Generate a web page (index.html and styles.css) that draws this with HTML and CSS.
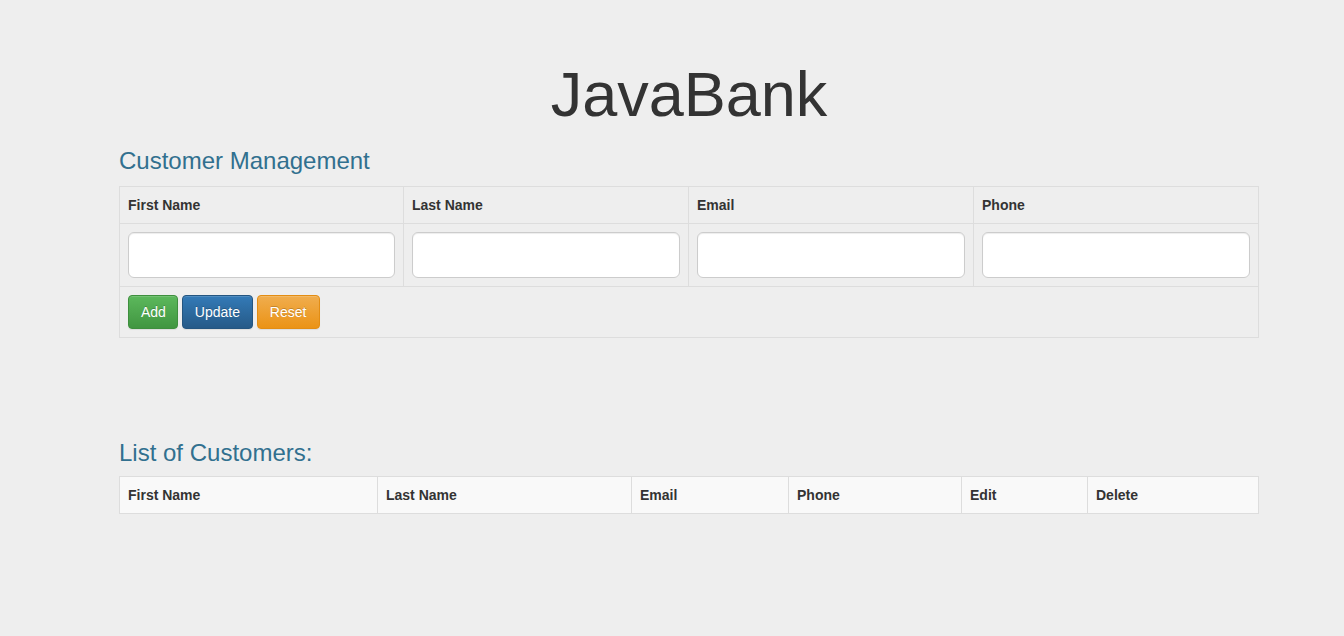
FILE: index.html
```html
<!DOCTYPE html>
<html>
<head>
<meta charset="utf-8">
<title>JavaBank</title>
<link rel="stylesheet" href="styles.css">
</head>
<body>
<div class="container">
  <h1 class="title">JavaBank</h1>
  <h3 class="section-title">Customer Management</h3>
  <table class="table form-table">
    <thead>
      <tr>
        <th class="f-first">First Name</th>
        <th class="f-last">Last Name</th>
        <th class="f-email">Email</th>
        <th class="f-phone">Phone</th>
      </tr>
    </thead>
    <tbody>
      <tr>
        <td><input class="input-lg" type="text"></td>
        <td><input class="input-lg" type="text"></td>
        <td><input class="input-lg" type="text"></td>
        <td><input class="input-lg" type="text"></td>
      </tr>
      <tr>
        <td colspan="4" class="actions">
          <button class="btn btn-success">Add</button>
          <button class="btn btn-primary">Update</button>
          <button class="btn btn-warning">Reset</button>
        </td>
      </tr>
    </tbody>
  </table>

  <h3 class="section-title list-title">List of Customers:</h3>
  <table class="table list-table">
    <thead>
      <tr>
        <th class="c-first">First Name</th>
        <th class="c-last">Last Name</th>
        <th class="c-email">Email</th>
        <th class="c-phone">Phone</th>
        <th class="c-edit">Edit</th>
        <th class="c-delete">Delete</th>
      </tr>
    </thead>
  </table>
</div>
</body>
</html>
```

FILE: styles.css
```css
* {
  box-sizing: border-box;
}

html, body {
  margin: 0;
  padding: 0;
}

body {
  background: #eeeeee;
  font-family: "Liberation Sans", Arial, Helvetica, sans-serif;
  font-size: 14px;
  line-height: 1.42857;
  color: #333333;
  padding-left: 34px;
}

.container {
  width: 1140px;
  margin: 0 auto;
  padding-top: 60px;
}

.title {
  margin: 0 0 19px 0;
  font-size: 63px;
  font-weight: 400;
  line-height: 1.1;
  text-align: center;
  color: #333333;
}

.section-title {
  margin: 0 0 11px 0;
  font-size: 24px;
  font-weight: 400;
  line-height: 1.1;
  color: #31708f;
}

.list-title {
  margin-top: 102px;
  margin-bottom: 10px;
}

.table {
  width: 100%;
  border-collapse: collapse;
  border-spacing: 0;
  border: 1px solid #dddddd;
  table-layout: fixed;
}

.table th,
.table td {
  padding: 8px;
  border: 1px solid #dddddd;
  text-align: left;
  vertical-align: top;
  line-height: 20px;
}

.table th {
  font-weight: 700;
}

.form-table .f-first { width: 284px; }
.form-table .f-last { width: 285px; }
.form-table .f-email { width: 285px; }
.form-table .f-phone { width: auto; }

.input-lg {
  display: block;
  width: 100%;
  height: 46px;
  padding: 10px 16px;
  font-size: 18px;
  font-family: inherit;
  line-height: 1.33;
  color: #555555;
  background: #ffffff;
  border: 1px solid #cccccc;
  border-radius: 6px;
  box-shadow: inset 0 1px 1px rgba(0, 0, 0, 0.075);
}

.btn {
  display: inline-block;
  margin: 0;
  padding: 6px 12px;
  font-family: inherit;
  font-size: 14px;
  line-height: 20px;
  color: #ffffff;
  border: 1px solid transparent;
  border-radius: 4px;
  text-shadow: 0 -1px 0 rgba(0, 0, 0, 0.2);
  box-shadow: inset 0 1px 0 rgba(255, 255, 255, 0.15), 0 1px 1px rgba(0, 0, 0, 0.075);
  cursor: pointer;
  vertical-align: middle;
}

.btn-success {
  padding-right: 11px;
  background: linear-gradient(to bottom, #5cb85c 0%, #419641 100%);
  border-color: #3e8f3e;
}

.btn-primary {
  background: linear-gradient(to bottom, #337ab7 0%, #265a88 100%);
  border-color: #245580;
}

.btn-warning {
  padding-right: 13px;
  background: linear-gradient(to bottom, #f0ad4e 0%, #eb9316 100%);
  border-color: #e38d13;
}

.list-table thead tr {
  background: #f9f9f9;
}

.list-table .c-first { width: 258px; }
.list-table .c-last { width: 254px; }
.list-table .c-email { width: 157px; }
.list-table .c-phone { width: 173px; }
.list-table .c-edit { width: 126px; }
.list-table .c-delete { width: auto; }
```
